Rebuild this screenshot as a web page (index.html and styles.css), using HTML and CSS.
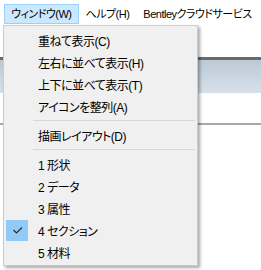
FILE: index.html
```html
<!DOCTYPE html>
<html lang="ja">
<head>
  <meta charset="UTF-8">
  <title>ウィンドウ メニュー</title>
  <link rel="stylesheet" href="styles.css">
</head>
<body>

  <div class="menubar">
    <div class="menu-title activo">ウィンドウ(W)</div>
    <div class="menu-title">ヘルプ(H)</div>
    <div class="menu-title">Bentleyクラウドサービス</div>
  </div>

  <div class="area-trabajo">
    <div class="barra-superior"></div>
    <div class="banda"></div>
    <div class="zona-vacia"></div>
  </div>

  <!-- menu desplegable sobre el contenido -->
  <div class="desplegable">
    <div class="item"><span class="gutter"></span><span class="texto">重ねて表示(C)</span></div>
    <div class="item"><span class="gutter"></span><span class="texto">左右に並べて表示(H)</span></div>
    <div class="item"><span class="gutter"></span><span class="texto">上下に並べて表示(T)</span></div>
    <div class="item"><span class="gutter"></span><span class="texto">アイコンを整列(A)</span></div>
    <div class="separador"></div>
    <div class="item"><span class="gutter"></span><span class="texto">描画レイアウト(D)</span></div>
    <div class="separador"></div>
    <div class="item"><span class="gutter"></span><span class="texto">1 形状</span></div>
    <div class="item"><span class="gutter"></span><span class="texto">2 データ</span></div>
    <div class="item"><span class="gutter"></span><span class="texto">3 属性</span></div>
    <div class="item">
      <span class="gutter">
        <span class="check">
          <svg width="22" height="21" viewBox="0 0 22 21">
            <polyline points="7.5,10 10.5,13 16,7.5" fill="none" stroke="#2b2b2b" stroke-width="1.1"/>
          </svg>
        </span>
      </span>
      <span class="texto">4 セクション</span>
    </div>
    <div class="item"><span class="gutter"></span><span class="texto">5 材料</span></div>
  </div>

</body>
</html>
```

FILE: styles.css
```css
body {
  margin: 0;
  padding: 0;
  background-color: #ffffff;
  font-family: "Liberation Sans", "Noto Sans CJK JP", sans-serif;
  font-size: 12px;
  font-feature-settings: "palt" 1;
  color: #000000;
  position: relative;
  height: 270px;
  overflow: hidden;
}

.menubar {
  display: flex;
  height: 25px;
  padding: 4px 0 0 4px;
  box-sizing: border-box;
  background-color: #ffffff;
  font-size: 11px;
  letter-spacing: -0.5px;
}

.menu-title {
  height: 20px;
  line-height: 19px;
  padding: 0 6px;
  border: 1px solid transparent;
  box-sizing: border-box;
  white-space: nowrap;
}

.menu-title.activo {
  background-color: #cce8ff;
  border-color: #99d1ff;
}

.barra-superior {
  height: 32px;
  background-color: #ffffff;
}

.banda {
  height: 36px;
  border-top: 3px solid #6a6a6a;
  box-sizing: border-box;
  background: linear-gradient(#bccad6, #d6e0e9);
}

.zona-vacia {
  height: 30px;
  border-bottom: 2px solid #a8a8a8;
  background-color: #ffffff;
}

.desplegable {
  position: absolute;
  left: 3px;
  top: 25px;
  width: 195px;
  padding: 3px 0 2px 0;
  box-sizing: border-box;
  background-color: #f0f0f0;
  border: 1px solid #cccccc;
  box-shadow: 2px 2px 3px rgba(0, 0, 0, 0.35);
  letter-spacing: -0.5px;
}

.item {
  display: flex;
  align-items: center;
  height: 22px;
}

.gutter {
  width: 29px;
  height: 22px;
  flex-shrink: 0;
  display: flex;
  align-items: center;
  padding-left: 2px;
  box-sizing: border-box;
}

.check {
  width: 22px;
  height: 21px;
  background-color: #91c9f7;
}

.check svg {
  display: block;
}

.texto {
  padding-left: 5px;
  white-space: nowrap;
}

.separador {
  height: 7px;
  margin: 0 2px 0 29px;
  background: linear-gradient(transparent 3px, #d7d7d7 3px, #d7d7d7 4px, transparent 4px);
}
```
